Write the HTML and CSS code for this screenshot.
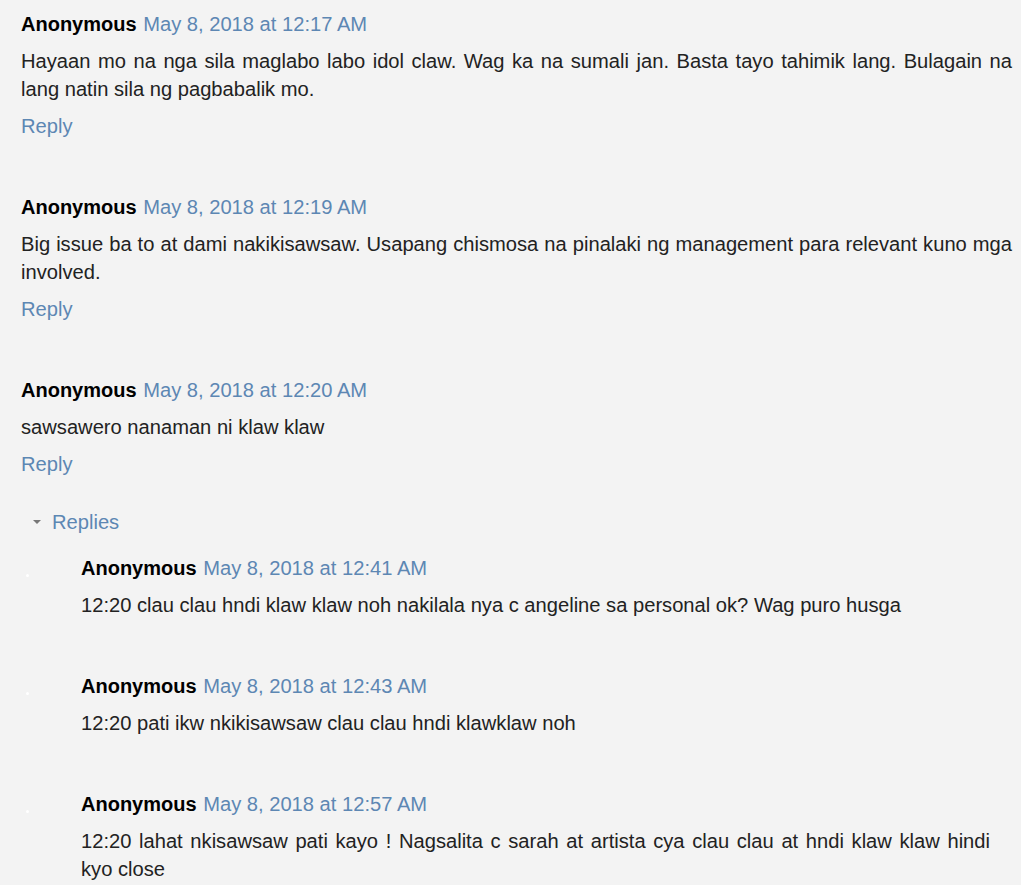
FILE: index.html
```html
<!DOCTYPE html>
<html lang="en">

<head>
    <meta charset="UTF-8">
    <meta name="viewport" content="width=device-width, initial-scale=1.0">
    <title>Comments</title>
    <link rel="stylesheet" href="styles.css">
</head>

<body>
    <div class="comments">
        <div class="comment">
            <div class="comment-head"><span class="user">Anonymous</span> <a class="stamp" href="#">May 8, 2018 at 12:17 AM</a></div>
            <p class="comment-body">Hayaan mo na nga sila maglabo labo idol claw. Wag ka na sumali jan. Basta tayo tahimik lang. Bulagain na lang natin sila ng pagbabalik mo.</p>
            <a class="reply" href="#">Reply</a>
        </div>

        <div class="comment">
            <div class="comment-head"><span class="user">Anonymous</span> <a class="stamp" href="#">May 8, 2018 at 12:19 AM</a></div>
            <p class="comment-body">Big issue ba to at dami nakikisawsaw. Usapang chismosa na pinalaki ng management para relevant kuno mga involved.</p>
            <a class="reply" href="#">Reply</a>
        </div>

        <div class="comment">
            <div class="comment-head"><span class="user">Anonymous</span> <a class="stamp" href="#">May 8, 2018 at 12:20 AM</a></div>
            <p class="comment-body">sawsawero nanaman ni klaw klaw</p>
            <a class="reply" href="#">Reply</a>

            <div class="thread">
                <a class="thread-toggle" href="#"><span class="arrow"></span>Replies</a>
                <div class="thread-list">
                    <div class="child">
                        <span class="avatar"></span>
                        <div class="comment-head"><span class="user">Anonymous</span> <a class="stamp" href="#">May 8, 2018 at 12:41 AM</a></div>
                        <p class="comment-body">12:20 clau clau hndi klaw klaw noh nakilala nya c angeline sa personal ok? Wag puro husga</p>
                    </div>
                    <div class="child">
                        <span class="avatar"></span>
                        <div class="comment-head"><span class="user">Anonymous</span> <a class="stamp" href="#">May 8, 2018 at 12:43 AM</a></div>
                        <p class="comment-body">12:20 pati ikw nkikisawsaw clau clau hndi klawklaw noh</p>
                    </div>
                    <div class="child">
                        <span class="avatar"></span>
                        <div class="comment-head"><span class="user">Anonymous</span> <a class="stamp" href="#">May 8, 2018 at 12:57 AM</a></div>
                        <p class="comment-body">12:20 lahat nkisawsaw pati kayo ! Nagsalita c sarah at artista cya clau clau at hndi klaw klaw hindi kyo close</p>
                    </div>
                </div>
            </div>
        </div>
    </div>
</body>

</html>
```

FILE: styles.css
```css
* {
    margin: 0;
    padding: 0;
}

body {
    background-color: #f3f3f3;
    color: #222;
    font-family: "Liberation Sans", Arial, sans-serif;
    font-size: 20.15px;
    line-height: 28px;
}

a {
    color: #5d87b3;
    text-decoration: none;
}

.comments {
    padding: 10px 9px 0 21px;
}

.comment {
    margin-bottom: 53px;
}

.comment-head {
    height: 28px;
}

.user {
    color: #000;
    font-weight: bold;
    font-size: 20px;
}

.stamp {
    margin-left: 1px;
}

.comment-body {
    margin-top: 9px;
    text-align: justify;
}

.reply {
    display: inline-block;
    margin-top: 9px;
}

.thread {
    margin-top: 30px;
}

.thread-toggle {
    display: flex;
    align-items: center;
    padding-left: 12px;
}

.arrow {
    width: 0;
    height: 0;
    margin-right: 11px;
    border-left: 4px solid transparent;
    border-right: 4px solid transparent;
    border-top: 4px solid #777;
}

.thread-list {
    margin-top: 18px;
    padding-left: 60px;
    padding-right: 22px;
}

.child {
    position: relative;
    margin-bottom: 53px;
}

.avatar {
    position: absolute;
    left: -55px;
    top: 20px;
    width: 3px;
    height: 3px;
    border-radius: 50%;
    background-color: #fff;
}
```
